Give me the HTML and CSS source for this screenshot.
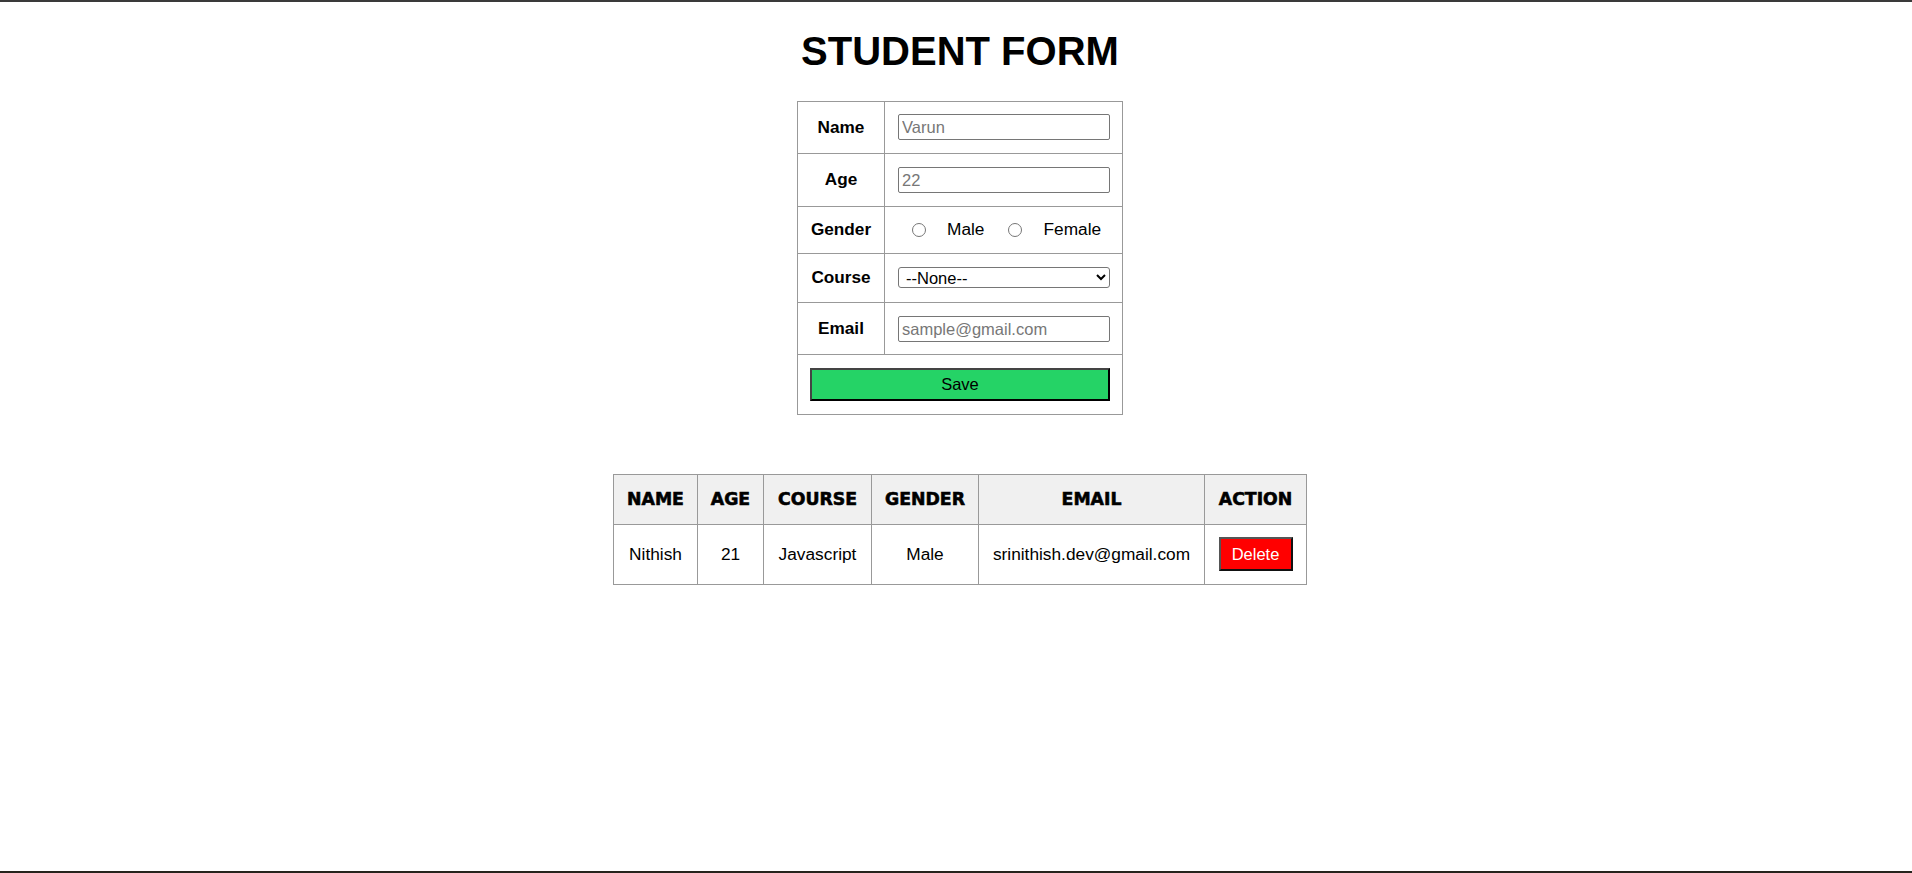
FILE: index.html
```html
<!DOCTYPE html>
<html lang="en">
<head>
<meta charset="utf-8">
<title>Student Form</title>
<link rel="stylesheet" href="styles.css">
</head>
<body>
<main class="page">
  <h1 class="title">STUDENT FORM</h1>
  <form class="student-form">
    <table class="form-table">
      <colgroup><col class="col-label"><col class="col-field"></colgroup>
      <tbody>
        <tr>
          <td class="label">Name</td>
          <td class="field field-name"><input class="text-input" type="text" placeholder="Varun"></td>
        </tr>
        <tr>
          <td class="label">Age</td>
          <td class="field field-age"><input class="text-input" type="text" placeholder="22"></td>
        </tr>
        <tr>
          <td class="label">Gender</td>
          <td class="field field-gender">
            <div class="choices">
              <label class="choice"><input class="radio" type="radio" name="gender"><span>Male</span></label>
              <label class="choice"><input class="radio" type="radio" name="gender"><span>Female</span></label>
            </div>
          </td>
        </tr>
        <tr>
          <td class="label">Course</td>
          <td class="field field-course">
            <select class="select">
              <option>--None--</option>
              <option>Javascript</option>
              <option>Python</option>
              <option>Java</option>
            </select>
          </td>
        </tr>
        <tr>
          <td class="label">Email</td>
          <td class="field field-email"><input class="text-input" type="email" placeholder="sample@gmail.com"></td>
        </tr>
        <tr>
          <td class="save-cell" colspan="2"><button class="save-btn" type="button">Save</button></td>
        </tr>
      </tbody>
    </table>
  </form>

  <table class="data-table">
    <colgroup>
      <col class="c-name"><col class="c-age"><col class="c-course"><col class="c-gender"><col class="c-email"><col class="c-action">
    </colgroup>
    <thead>
      <tr>
        <th>NAME</th><th>AGE</th><th>COURSE</th><th>GENDER</th><th>EMAIL</th><th>ACTION</th>
      </tr>
    </thead>
    <tbody>
      <tr>
        <td>Nithish</td>
        <td>21</td>
        <td>Javascript</td>
        <td>Male</td>
        <td>srinithish.dev@gmail.com</td>
        <td class="action-cell"><button class="delete-btn" type="button">Delete</button></td>
      </tr>
    </tbody>
  </table>
</main>
</body>
</html>
```

FILE: styles.css
```css
html {
  height: 100%;
}

body {
  margin: 0;
  min-height: 100vh;
  box-sizing: border-box;
  padding-left: 8px;
  border-top: 2px solid #3a3a3a;
  border-bottom: 2px solid #26241d;
  background: #ffffff;
  color: #000000;
  font-family: "Liberation Sans", Arial, sans-serif;
}

.page {
  display: flex;
  flex-direction: column;
  align-items: center;
}

.title {
  margin: 26px 0 27px;
  font-size: 40px;
  line-height: 46px;
  font-weight: bold;
}

.student-form {
  margin: 0;
}

/* ---------- form table ---------- */
.form-table {
  border-collapse: collapse;
  table-layout: fixed;
  width: 326px;
}

.col-label { width: 87px; }
.col-field { width: 238px; }

.form-table td {
  border: 1px solid #999999;
}

.label {
  text-align: center;
  font-weight: bold;
  font-size: 17.2px;
  padding: 0 0 1px;
  vertical-align: middle;
}

.field {
  padding: 12px 12px 13px 13px;
}

.field-age { padding-top: 13px; padding-bottom: 13px; }
.field-gender { padding-top: 12px; padding-bottom: 14px; }
.field-course { padding-top: 13px; padding-bottom: 14px; }
.field-email { padding-top: 13px; padding-bottom: 12px; }

.text-input {
  display: block;
  box-sizing: border-box;
  width: 212px;
  height: 26px;
  margin: 0;
  padding: 0 3px;
  border: 1px solid #767676;
  border-radius: 2px;
  font-family: "Liberation Sans", Arial, sans-serif;
  font-size: 16.5px;
  color: #000000;
  background: #ffffff;
}

.text-input::placeholder {
  color: #777777;
}

.choices {
  display: flex;
  align-items: center;
  gap: 24px;
  height: 20px;
  padding-left: 14px;
}

.choice {
  display: flex;
  align-items: center;
  gap: 21px;
  font-size: 17.3px;
  line-height: 20px;
}

.radio {
  width: 14px;
  height: 14px;
  margin: 2px 0 0 0;
}

.select {
  display: block;
  box-sizing: border-box;
  width: 212px;
  height: 21px;
  margin: 0;
  padding: 0 0 0 3px;
  border: 1px solid #767676;
  border-radius: 3px;
  background: #ffffff;
  color: #000000;
  font-family: "Liberation Sans", Arial, sans-serif;
  font-size: 16.5px;
}

.save-cell {
  padding: 13px 12px;
}

.save-btn {
  display: block;
  box-sizing: border-box;
  width: 300px;
  height: 33px;
  margin: 0;
  padding: 0;
  background: #25d366;
  border-style: solid;
  border-width: 2px;
  border-color: #444444 #000000 #000000 #444444;
  color: #000000;
  font-family: "Liberation Sans", Arial, sans-serif;
  font-size: 16.5px;
}

/* ---------- data table ---------- */
.data-table {
  margin-top: 59px;
  border-collapse: collapse;
  table-layout: fixed;
  width: 693px;
}

.c-name { width: 84px; }
.c-age { width: 66px; }
.c-course { width: 108px; }
.c-gender { width: 107px; }
.c-email { width: 226px; }
.c-action { width: 102px; }

.data-table th,
.data-table td {
  border: 1px solid #999999;
  text-align: center;
  vertical-align: middle;
}

.data-table th {
  padding: 14px 0;
  line-height: 21px;
  background: #f0f0f0;
  font-family: "DejaVu Sans", "Liberation Sans", sans-serif;
  font-weight: bold;
  font-size: 17.3px;
  -webkit-text-stroke: 0.6px #000000;
}

.data-table td {
  padding: 12px 0 13px;
  font-size: 17.3px;
  line-height: 20px;
}

.delete-btn {
  display: block;
  box-sizing: border-box;
  width: 74px;
  height: 34px;
  margin: 0 auto;
  padding: 0;
  background: #ff0000;
  border-style: solid;
  border-width: 2px;
  border-color: #555555 #111111 #111111 #555555;
  color: #ffffff;
  font-family: "Liberation Sans", Arial, sans-serif;
  font-size: 16.5px;
}
```
